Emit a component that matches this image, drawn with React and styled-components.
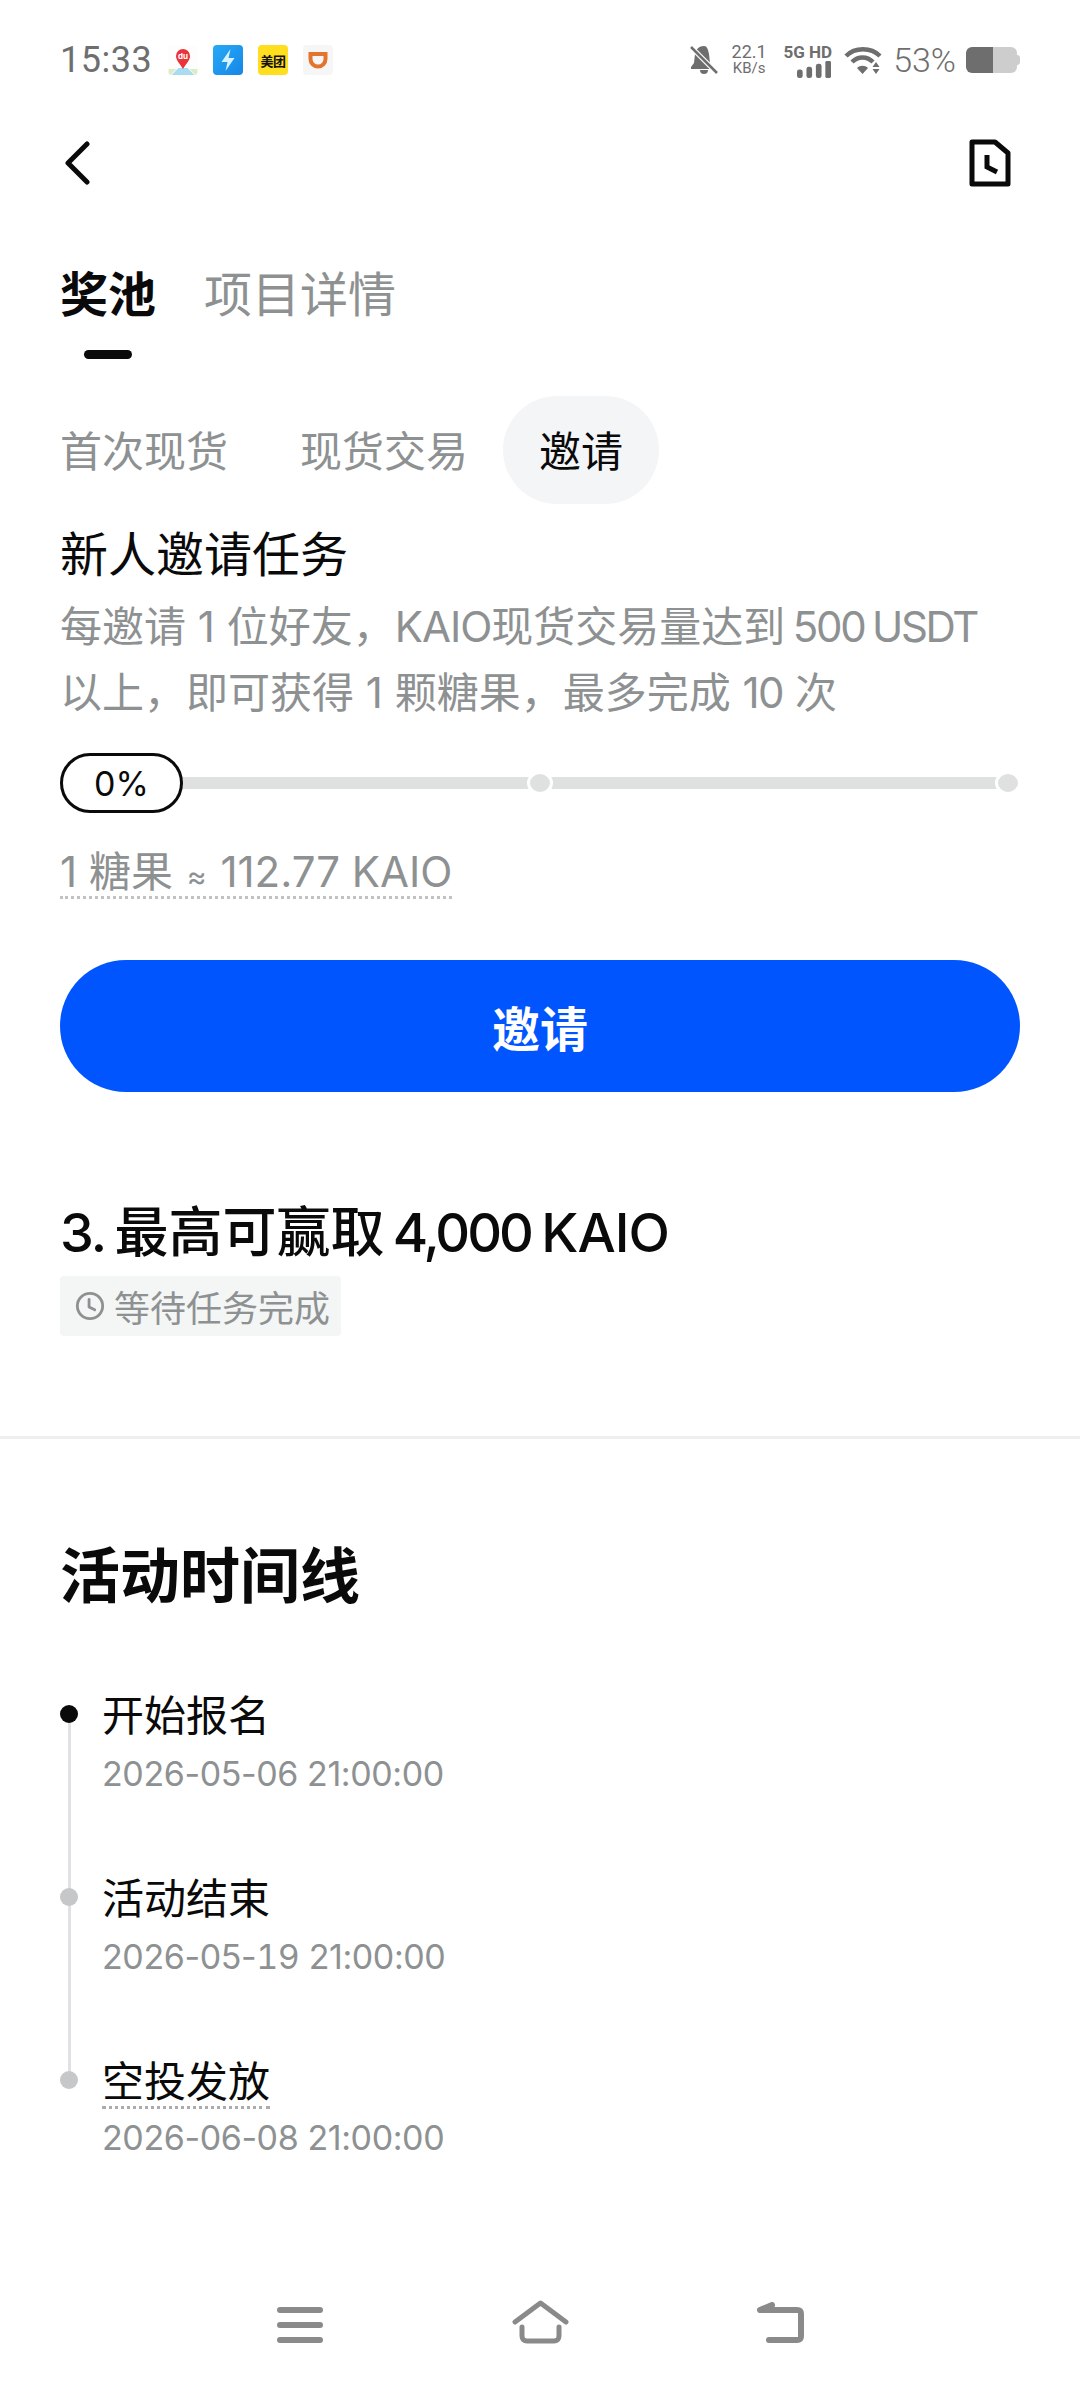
import React from "react";
import styled, { createGlobalStyle } from "styled-components";

const Global = createGlobalStyle`
  html, body { margin: 0; padding: 0; background: #fff; }
  * { box-sizing: border-box; }
`;

const FONT = `Inter, "Noto Sans CJK SC", sans-serif`;

const Page = styled.div`
  width: 1080px;
  height: 2388px;
  background: #fff;
  color: #0a0a0a;
  font-family: ${FONT};
  display: flex;
  flex-direction: column;
  overflow: hidden;
`;

const StatusBar = styled.div`
  height: 120px;
  padding: 0 60px;
  display: flex;
  align-items: center;
  justify-content: space-between;
  color: #6e6e6e;
`;
const StatusLeft = styled.div`
  display: flex;
  align-items: center;
`;
const Time = styled.span`
  font-size: 36px;
  width: 108px;
  font-family: "Roboto", sans-serif;
  letter-spacing: 0.5px;
`;
const AppIcons = styled.div`
  display: flex;
  gap: 15px;
`;
const AppTile = styled.div`
  width: 30px;
  height: 30px;
  border-radius: 4px;
  background: ${(p) => p.$bg};
  display: flex;
  align-items: center;
  justify-content: center;
  overflow: hidden;
  position: relative;
`;
const MeituanText = styled.span`
  font-size: 13px;
  font-weight: 700;
  color: #111;
  white-space: nowrap;
  letter-spacing: -0.5px;
`;
const DuText = styled.span`
  position: absolute;
  top: 6px;
  left: 0;
  width: 100%;
  text-align: center;
  font-size: 8px;
  font-weight: 700;
  color: #fff;
`;
const StatusRight = styled.div`
  display: flex;
  align-items: center;
`;
const Speed = styled.div`
  width: 38px;
  margin-left: 12px;
  display: flex;
  flex-direction: column;
  align-items: center;
  line-height: 17px;
  font-family: "Roboto", sans-serif;
`;
const SpeedValue = styled.span`
  font-size: 18px;
`;
const SpeedUnit = styled.span`
  font-size: 15px;
`;
const Signal = styled.div`
  width: 50px;
  margin-left: 14px;
  display: flex;
  flex-direction: column;
  align-items: flex-end;
`;
const SignalLabel = styled.span`
  font-size: 17px;
  line-height: 18px;
  font-weight: 700;
  font-family: "Roboto", sans-serif;
  white-space: nowrap;
`;
const Percent = styled.span`
  margin-left: 11px;
  font-size: 34px;
  font-family: "Roboto", sans-serif;
  font-weight: 300;
`;
const Battery = styled.div`
  margin-left: 10px;
  width: 51px;
  height: 26px;
  border-radius: 6px;
  overflow: hidden;
  background: linear-gradient(to right, #6e6e6e 0 52%, #cdcdcd 52% 100%);
`;
const BatteryRow = styled.div`
  display: flex;
  align-items: center;
`;
const BatteryTip = styled.div`
  width: 3px;
  height: 10px;
  border-radius: 0 3px 3px 0;
  background: #cdcdcd;
`;

const NavRow = styled.div`
  height: 88px;
  padding: 0 69px 2px 65px;
  display: flex;
  align-items: center;
  justify-content: space-between;
`;

const MainTabs = styled.div`
  margin-top: 53px;
  padding: 0 60px;
  display: flex;
  gap: 48px;
`;
const MainTab = styled.div`
  font-size: 48px;
  line-height: 68px;
  padding-bottom: 67px;
  font-weight: ${(p) => (p.$active ? 700 : 400)};
  color: ${(p) => (p.$active ? "#0a0a0a" : "#8e9192")};
  position: relative;
  &::after {
    content: "";
    display: ${(p) => (p.$active ? "block" : "none")};
    position: absolute;
    left: 24px;
    bottom: 37px;
    width: 48px;
    height: 9px;
    border-radius: 5px;
    background: #0a0a0a;
  }
`;

const SubTabs = styled.div`
  padding: 0 60px;
  height: 108px;
  display: flex;
  align-items: center;
  gap: 72px;
`;
const SubTab = styled.div`
  font-size: 42px;
  padding-bottom: 3px;
  color: ${(p) => (p.$active ? "#0a0a0a" : "#8e9192")};
  ${(p) =>
    p.$active
      ? `
    background: #f4f5f6;
    height: 108px;
    border-radius: 54px;
    padding: 0 36px 3px;
    margin-left: -37px;
    display: flex;
    align-items: center;
  `
      : ""}
`;

const TaskSection = styled.div`
  padding: 18px 60px 0;
`;
const TaskTitle = styled.div`
  font-size: 48px;
  line-height: 66px;
`;
const TaskDesc = styled.div`
  font-size: 42px;
  line-height: 66px;
  color: #8e9192;
  margin-top: 6px;
  white-space: nowrap;
`;
const Latin = styled.span`
  letter-spacing: ${(p) => p.$ls || "-1px"};
  word-spacing: ${(p) => p.$ws || "-2px"};
`;
const Progress = styled.div`
  margin-top: 27px;
  display: flex;
  align-items: center;
  height: 60px;
  position: relative;
  padding-right: 12px;
`;
const Pill = styled.div`
  position: absolute;
  left: 0;
  top: 0;
  z-index: 1;
  width: 123px;
  height: 60px;
  border: 3px solid #0a0a0a;
  border-radius: 30px;
  background: #fff;
  font-size: 34px;
  display: flex;
  align-items: center;
  justify-content: center;
`;
const Track = styled.div`
  flex: 1;
  height: 12px;
  background: #dfe1e1;
  position: relative;
`;
const Knob = styled.div`
  position: absolute;
  top: -6px;
  left: calc(${(p) => p.$at} - 13px);
  width: 26px;
  height: 24px;
  border-radius: 50%;
  background: #dfe1e1;
  border: 3px solid #fff;
`;
const RateRow = styled.div`
  margin-top: 34px;
  height: 52px;
`;
const Rate = styled.span`
  display: inline-block;
  height: 52px;
  font-size: 42px;
  line-height: 49px;
  color: #8e9192;
  border-bottom: 3px dotted #c0c2c3;
`;
const Approx = styled.span`
  font-size: 30px;
  line-height: 1;
  margin: 0 2px;
`;
const PrimaryButton = styled.button`
  display: block;
  width: 100%;
  height: 132px;
  margin-top: 61px;
  border: 0;
  border-radius: 66px;
  background: #0055ff;
  color: #fff;
  font-family: ${FONT};
  font-size: 48px;
  font-weight: 700;
`;
const RewardTitle = styled.div`
  margin-top: 103px;
  font-size: 54px;
  line-height: 76px;
  font-weight: 500;
`;
const WaitBadge = styled.div`
  margin-top: 5px;
  width: fit-content;
  height: 60px;
  padding: 0 11px 0 15px;
  display: flex;
  align-items: center;
  gap: 9px;
  background: #f4f5f5;
  border-radius: 4px;
  font-size: 36px;
  color: #8e9192;
`;
const Divider = styled.div`
  margin-top: 100px;
  height: 3px;
  background: #eeeff0;
`;
const TimelineSection = styled.div`
  padding: 0 60px;
`;
const SectionTitle = styled.div`
  margin-top: 95px;
  font-size: 60px;
  line-height: 84px;
  font-weight: 700;
`;
const Timeline = styled.div`
  margin-top: 69px;
`;
const TimelineItem = styled.div`
  position: relative;
  height: 183px;
  padding-left: 42px;
  &::before {
    content: "";
    position: absolute;
    left: 0;
    top: 18px;
    width: 18px;
    height: 18px;
    border-radius: 50%;
    background: ${(p) => (p.$active ? "#0a0a0a" : "#c5c7c9")};
    z-index: 1;
  }
  &::after {
    content: "";
    display: ${(p) => (p.$last ? "none" : "block")};
    position: absolute;
    left: 8px;
    top: 27px;
    width: 3px;
    height: 183px;
    background: #e0e1e2;
  }
`;
const ItemTitleText = styled.div`
  width: fit-content;
  font-size: 42px;
  line-height: 58px;
  ${(p) => (p.$dotted ? "border-bottom: 3px dotted #aaacae; line-height: 52px; padding-top: 3px; height: 56px; margin-bottom: 2px;" : "")}
`;
const ItemDate = styled.div`
  margin-top: 5px;
  font-size: 34px;
  line-height: 48px;
  color: #8e9192;
  letter-spacing: -0.4px;
`;
const WideDigits = styled.span`
  font-feature-settings: "tnum";
`;
const BottomNav = styled.div`
  margin-top: auto;
  height: 88px;
  padding: 0 0 0 277px;
  display: flex;
  align-items: flex-start;
`;
const NavSlot = styled.div`
  display: flex;
  width: ${(p) => p.$w}px;
  margin-top: ${(p) => p.$top || 0}px;
`;

const Stroke = ({ w, h, children, sw = 4, color = "currentColor" }) => (
  <svg width={w} height={h} viewBox={`0 0 ${w} ${h}`} fill="none" stroke={color} strokeWidth={sw} strokeLinecap="round" strokeLinejoin="round">
    {children}
  </svg>
);

export default function App() {
  return (
    <Page>
      <Global />
      <StatusBar>
        <StatusLeft>
          <Time>15:33</Time>
          <AppIcons>
            <AppTile $bg="#fdfdfd">
              <svg width="30" height="30" viewBox="0 0 29 30">
                <path d="M3 30l7-7h9l7 7z" fill="#a8dcf2" />
                <path d="M0 30v-6h8l-6 6zM29 30v-6h-8l6 6z" fill="#dcecc8" />
                <path d="M14.500 24C11 18 7.500 15.500 7.500 11a7 7 0 0 1 14 0c0 4.500-3.500 7-7 13z" fill="#e8343a" />
              </svg>
              <DuText>du</DuText>
            </AppTile>
            <AppTile $bg="linear-gradient(135deg,#26aaf6,#1686e6)">
              <svg width="30" height="30" viewBox="0 0 29 30">
                <path d="M17 4L8 17h6l-2 9 9-13h-6z" fill="#d6f2ff" />
              </svg>
            </AppTile>
            <AppTile $bg="#ffdd1f">
              <MeituanText>美团</MeituanText>
            </AppTile>
            <AppTile $bg="#f6f6f6">
              <svg width="30" height="30" viewBox="0 0 29 30" fill="none">
                <path d="M7 9h15v5a7.500 7.500 0 0 1-15 0z" stroke="#e2742e" strokeWidth="4" />
              </svg>
            </AppTile>
          </AppIcons>
        </StatusLeft>
        <StatusRight>
          <svg width="28" height="30" viewBox="0 0 28 30">
            <path d="M14 1c-5 0-8 3-9 8l-1 9-3 4v2h22v-2l-3-4-1-9c-1-5-2-8-5-8zM10 25a4 4 0 0 0 8 0z" fill="#6e6e6e" />
            <path d="M1 2l26 26" stroke="#fff" strokeWidth="5" />
            <path d="M1 2l26 26" stroke="#6e6e6e" strokeWidth="2.500" />
          </svg>
          <Speed>
            <SpeedValue>22.1</SpeedValue>
            <SpeedUnit>KB/s</SpeedUnit>
          </Speed>
          <Signal>
            <SignalLabel>5G HD</SignalLabel>
            <svg width="36" height="17" viewBox="0 0 36 18" fill="#6e6e6e">
              <rect x="0" y="9" width="6" height="9" rx="2.500" />
              <rect x="10" y="6" width="6" height="12" rx="2.500" />
              <rect x="20" y="3" width="6" height="15" rx="2.500" />
              <rect x="30" y="0" width="6" height="18" rx="1.500" />
            </svg>
          </Signal>
          <svg width="38" height="30" viewBox="0 0 38 30" style={{ marginLeft: 12 }} fill="none">
            <path d="M2 11c9-9 25-9 34 0" stroke="#6e6e6e" strokeWidth="4.500" />
            <path d="M8 17c6-6 15-6 21 0" stroke="#6e6e6e" strokeWidth="4.500" />
            <path d="M13 23c3-3 8-3 11 0l-5.500 6z" fill="#6e6e6e" />
            <path d="M32 17l3.500 5h-7zM28.500 24h7l-3.500 5z" fill="#6e6e6e" />
          </svg>
          <Percent>53%</Percent>
          <BatteryRow>
            <Battery />
            <BatteryTip />
          </BatteryRow>
        </StatusRight>
      </StatusBar>
      <NavRow>
        <Stroke w={25} h={44} sw={5}>
          <path d="M22 3L3 22l19 19" />
        </Stroke>
        <Stroke w={42} h={48} sw={5}>
          <path d="M3 3h23l13 11v31H3z" />
          <path d="M18 16v12l10 5" strokeLinecap="butt" strokeLinejoin="miter" />
        </Stroke>
      </NavRow>
      <MainTabs>
        <MainTab $active>奖池</MainTab>
        <MainTab>项目详情</MainTab>
      </MainTabs>
      <SubTabs>
        <SubTab>首次现货</SubTab>
        <SubTab>现货交易</SubTab>
        <SubTab $active>邀请</SubTab>
      </SubTabs>
      <TaskSection>
        <TaskTitle>新人邀请任务</TaskTitle>
        <TaskDesc>
          每邀请 1 位好友，<Latin>KAIO</Latin>现货交易量达到<Latin $ls="-2.3px"> 500 USDT</Latin>
          <br />
          以上，即可获得 1 颗糖果，最多完成 <Latin $ls="-1.5px">10</Latin> 次
        </TaskDesc>
        <Progress>
          <Pill>0%</Pill>
          <Track>
            <Knob $at="50.63%" />
            <Knob $at="100%" />
          </Track>
        </Progress>
        <RateRow>
          <Rate>1 糖果 <Approx>≈</Approx> 112.77 KAIO</Rate>
        </RateRow>
        <PrimaryButton>邀请</PrimaryButton>
        <RewardTitle>
          <Latin $ls="-2px" $ws="-2.500px">3. </Latin>最高可赢取<Latin $ls="-3px" $ws="-3px"> 4,000</Latin><Latin $ls="-1px" $ws="-3px"> KAIO</Latin>
        </RewardTitle>
        <WaitBadge>
          <svg width="30" height="30" viewBox="0 0 32 32" fill="none" stroke="#8e9192" strokeWidth="3" strokeLinecap="round" strokeLinejoin="round">
            <circle cx="16" cy="16" r="13.500" />
            <path d="M15 9v8l6 3" />
          </svg>
          等待任务完成
        </WaitBadge>
      </TaskSection>
      <Divider />
      <TimelineSection>
        <SectionTitle>活动时间线</SectionTitle>
        <Timeline>
          <TimelineItem $active>
            <ItemTitleText>开始报名</ItemTitleText>
            <ItemDate>2026-05-06 21:00:00</ItemDate>
          </TimelineItem>
          <TimelineItem>
            <ItemTitleText>活动结束</ItemTitleText>
            <ItemDate>2026-05-<WideDigits>19</WideDigits> 21:00:00</ItemDate>
          </TimelineItem>
          <TimelineItem $last>
            <ItemTitleText $dotted>空投发放</ItemTitleText>
            <ItemDate>2026-06-08 21:00:00</ItemDate>
          </TimelineItem>
        </Timeline>
      </TimelineSection>
      <BottomNav>
        <NavSlot $w={235} $top={7}>
          <Stroke w={46} h={36} sw={6} color="#8a8a8a">
            <path d="M3 3h40M3 18h40M3 33h40" />
          </Stroke>
        </NavSlot>
        <NavSlot $w={245}>
          <Stroke w={57} h={44} sw={5} color="#8a8a8a">
            <path d="M3 22L28.500 3 54 22" />
            <path d="M10 27v9c0 3 2 5 5 5h27c3 0 5-2 5-5v-9" />
          </Stroke>
        </NavSlot>
        <NavSlot $w={60} $top={2}>
          <Stroke w={47} h={41} sw={6} color="#8a8a8a">
            <path d="M15 3L3 8h37c3 0 4 1 4 4v22c0 3-1 4-4 4H12" />
          </Stroke>
        </NavSlot>
      </BottomNav>
    </Page>
  );
}
